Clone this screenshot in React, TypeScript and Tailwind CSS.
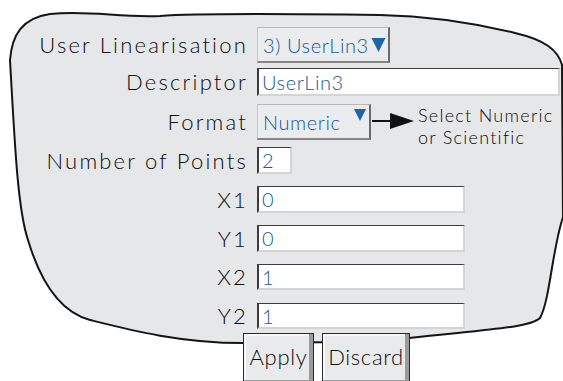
import type { ReactNode } from 'react'

const font = { fontFamily: 'Lato, "Open Sans", sans-serif' }

const Label = ({ children }: { children: ReactNode }) => (
  <div className="w-[248px] shrink-0 text-right text-[22px] font-light leading-none tracking-[0.1em] text-[#0d0d0d]">
    {children}
  </div>
)

const Field = ({ value, width }: { value: string; width: string }) => (
  <div
    className={`ml-[9px] flex h-full items-center border-t-[1.5px] border-l-2 border-r-2 border-b-2 border-t-[#3c3c3c] border-l-[#3c3c3c] border-r-[#d4d4d4] border-b-[#d4d4d4] bg-white pl-[3px] text-[20px] font-light leading-none tracking-[0.03em] text-[#17599a] ${width}`}
  >
    {value}
  </div>
)

const Triangle = ({ className }: { className: string }) => (
  <svg viewBox="0 0 14 14" className={className}>
    <polygon points="0,0 14,0 7,14" fill="#1f64a3" />
  </svg>
)

export default function App() {
  return (
    <div className="relative h-[381px] w-[563px] overflow-hidden bg-white" style={font}>
      {/* torn-paper outline */}
      <svg width="563" height="381" viewBox="0 0 563 381" className="absolute inset-0">
        <path
          d="M 10 60 C 12 35, 22 18, 50 14 C 90 10, 120 18, 160 16 C 200 13, 300 14, 380 15 C 430 16, 470 22, 515 33 C 545 40, 558 50, 562 65 L 563 217 C 552 250, 550 300, 540 318 C 530 328, 480 330, 409 338 C 360 342, 300 343, 243 343 C 180 343, 130 330, 90 320 C 60 312, 40 280, 28 240 C 18 210, 15 150, 10 60 Z"
          fill="#e6e7e9"
          stroke="#151515"
          strokeWidth="2"
        />
      </svg>

      <div className="relative pt-[27px]">
        <div className="flex h-[36px] items-center">
          <Label>User Linearisation</Label>
          <div className="ml-[9px] flex h-full w-[133px] items-center border-t border-l border-r-2 border-b-2 border-t-[#b8b8b8] border-l-[#c8c8c8] border-r-[#6a6a6a] border-b-[#858585] bg-[#ebeced] pl-[5px] pr-[2px] text-[20px] font-light leading-none tracking-[0.03em] text-[#17599a]">
            <span>3) UserLin3</span>
            <Triangle className="ml-[2px] h-[14px] w-[15px]" />
          </div>
        </div>

        <div className="mt-[5px] flex h-[28px] items-center">
          <Label>Descriptor</Label>
          <Field value="UserLin3" width="w-[303px]" />
        </div>

        <div className="mt-[8px] flex h-[36px] items-center">
          <Label>Format</Label>
          <div className="ml-[9px] flex h-full w-[114px] items-center justify-between border-t border-l border-r-2 border-b-2 border-t-[#b8b8b8] border-l-[#c8c8c8] border-r-[#6a6a6a] border-b-[#858585] bg-[#ebeced] pl-[5px] pr-[3px] text-[20px] font-light leading-none tracking-[0.03em] text-[#17599a]">
            <span>Numeric</span>
            <Triangle className="mb-[14px] h-[14px] w-[12px]" />
          </div>
          <svg width="43" height="36" viewBox="0 0 43 36" className="shrink-0">
            <line x1="1" y1="17" x2="22" y2="17" stroke="#111" strokeWidth="2" />
            <polygon points="19,9 43,17 19,25" fill="#111" />
          </svg>
          <div className="ml-[4px] self-start text-[18px] font-light leading-[22px] tracking-[0.07em] text-[#0d0d0d]">
            <div>Select Numeric</div>
            <div>or Scientific</div>
          </div>
        </div>

        <div className="mt-[7px] flex h-[27px] items-center">
          <Label>Number of Points</Label>
          <Field value="2" width="w-[35px]" />
        </div>

        <div className="mt-[12px] flex h-[27px] items-center">
          <Label>X1</Label>
          <Field value="0" width="w-[208px]" />
        </div>

        <div className="mt-[12px] flex h-[27px] items-center">
          <Label>Y1</Label>
          <Field value="0" width="w-[208px]" />
        </div>

        <div className="mt-[12px] flex h-[26px] items-center">
          <Label>X2</Label>
          <Field value="1" width="w-[208px]" />
        </div>

        <div className="mt-[13px] flex h-[26px] items-center">
          <Label>Y2</Label>
          <Field value="1" width="w-[208px]" />
        </div>

        <div className="ml-[243px] mt-[4px] flex gap-[8px]">
          {['Apply', 'Discard'].map((label) => (
            <button
              key={label}
              className={`flex h-[52px] items-start justify-center border border-[#2a2a2a] bg-[#e9eaeb] pt-[12px] text-[22px] font-light leading-none tracking-[0.03em] text-[#0d0d0d] shadow-[inset_-4px_-4px_0_#9c9c9c,inset_2px_2px_0_#f7f7f7] ${label === 'Apply' ? 'w-[71px]' : 'w-[88px]'}`}
            >
              {label}
            </button>
          ))}
        </div>
      </div>
    </div>
  )
}
